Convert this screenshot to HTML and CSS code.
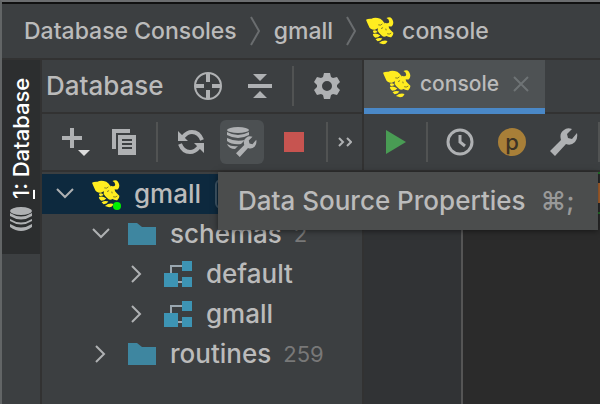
FILE: index.html
```
<!DOCTYPE html>
<html lang="en">
<head>
    <meta charset="UTF-8">
    <title>Database Consoles</title>
    <link rel="stylesheet" href="styles.css">
</head>
<body>
    <!-- shared icons -->
    <svg class="sprite" aria-hidden="true">
        <symbol id="bee" viewBox="0 0 82 82">
            <path d="M0 8 Q6 4 16 5 Q26 -1 42 5 Q50 10 54 18 L62 21 Q68 24 67 32 L72 38 L80 46 Q81 54 74 59 Q66 60 60 56 Q52 60 46 54 Q38 48 34 40 L35 33 L26 37 Q12 38 8 26 Q4 18 0 8 Z"/>
            <path d="M60 3 Q70 -2 76 5 Q84 18 76 27 Q68 30 58 24 L54 16 Q66 22 68 14 Q68 6 60 3 Z"/>
            <path d="M20 40 Q30 36 34 44 Q26 48 22 46 Z M20 50 Q30 46 42 54 Q36 61 27 61 Q20 57 20 50 Z M28 65 Q38 59 48 63 Q44 70 34 71 Z M38 76 Q50 66 63 70 Q60 79 50 80 Z"/>
            <path class="bee-line" d="M36 23 Q44 26 48 20 M44 34 L50 31 M58 34 L59 39 M62 49 Q68 52 74 47"/>
        </symbol>
        <symbol id="down" viewBox="0 0 18 18"><path d="M1 4 L9 12 L17 4"/></symbol>
        <symbol id="right" viewBox="0 0 18 18"><path d="M4 1 L12 9 L4 17"/></symbol>
        <symbol id="folder" viewBox="0 0 28 22"><path d="M0 0 H9 L14 4 H28 V22 H0 Z"/></symbol>
        <symbol id="schema" viewBox="0 0 28 26">
            <path d="M7 12 V5 H18 M14 21 H18" fill="none" stroke="#9aa7b0" stroke-width="2"/>
            <path d="M0 12 H14 V26 H0 Z M18 0 H28 V10 H18 Z M18 16 H28 V26 H18 Z"/>
        </symbol>
        <symbol id="wrench" viewBox="0 0 28 28">
            <path d="M0 23 L11 12 Q9 5 14 2 Q17 -1 22 1 L17 6 L18 10 L22 11 L27 5 Q28 11 25 14 Q21 18 16 16 L5 28 Z"/>
        </symbol>
    </svg>

    <div class="window">
        <nav class="breadcrumbs">
            <a href="#">Database Consoles</a>
            <svg class="crumb-arrow" viewBox="0 0 10 30"><path d="M1 1 L9 15 L1 29"/></svg>
            <a href="#">gmall</a>
            <svg class="crumb-arrow" viewBox="0 0 10 30"><path d="M1 1 L9 15 L1 29"/></svg>
            <a href="#" class="crumb-file"><svg class="bee"><use href="#bee"/></svg>console</a>
        </nav>

        <div class="main">
            <aside class="stripe">
                <button class="stripe-tab">
                    <svg class="stripe-icon" viewBox="0 0 24 22">
                        <g transform="rotate(-90 12 12) translate(2 0)">
                            <ellipse cx="11" cy="4" rx="11" ry="4"/>
                            <path d="M0 6 Q11 13 22 6 V9 Q11 16 0 9 Z M0 12 Q11 19 22 12 V14 Q11 21 0 14 Z M0 17 Q11 24 22 17 V20 Q11 28 0 20 Z"/>
                        </g>
                    </svg>
                    <span><u>1</u>: Database</span>
                </button>
            </aside>

            <section class="panel">
                <header class="panel-header">
                    <h2>Database</h2>
                    <button class="icon-btn" aria-label="Select opened file">
                        <svg viewBox="0 0 28 28" width="28" height="28">
                            <g fill="none" stroke="#afb1b3"><circle cx="14" cy="14" r="13" stroke-width="2"/><path d="M14 1 V10 M14 18 V27 M1 14 H10 M18 14 H27" stroke-width="4"/></g>
                        </svg>
                    </button>
                    <button class="icon-btn collapse" aria-label="Collapse all">
                        <svg viewBox="0 0 24 24" width="24" height="24"><path d="M5 0 H19 L12 7 Z M0 10 H24 V14 H0 Z M12 17 L19 24 H5 Z"/></svg>
                    </button>
                    <i class="divider"></i>
                    <button class="icon-btn" aria-label="Settings">
                        <svg viewBox="0 0 26 26" width="26" height="26">
                            <path fill-rule="evenodd" d="M10 0 H16 L17 4 L19 5 L23 4 L26 9 L23 12 V14 L26 17 L23 22 L19 21 L17 22 L16 26 H10 L9 22 L7 21 L3 22 L0 17 L3 14 V12 L0 9 L3 4 L7 5 L9 4 Z M13 8 A5 5 0 1 0 13 18 A5 5 0 1 0 13 8 Z"/>
                        </svg>
                    </button>
                </header>

                <div class="toolbar">
                    <button class="icon-btn" aria-label="New">
                        <svg viewBox="0 0 28 28" width="28" height="28"><path d="M8 0 H12 V8 H20 V12 H12 V20 H8 V12 H0 V8 H8 Z"/><path d="M16 22 H28 L22 28 Z" fill="#dcdcdc"/></svg>
                    </button>
                    <button class="icon-btn copy" aria-label="Duplicate">
                        <svg viewBox="0 0 24 26" width="24" height="26"><path d="M0 0 H18 V4 H4 V20 H0 Z"/><path fill-rule="evenodd" d="M6 6 H24 V26 H6 Z M10 10 V12 H20 V10 Z M10 14 V16 H20 V14 Z M10 18 V20 H20 V18 Z"/></svg>
                    </button>
                    <i class="divider"></i>
                    <button class="icon-btn" aria-label="Refresh">
                        <svg viewBox="0 0 26 24" width="26" height="24">
                            <path d="M5 7 Q9 2 14 2 Q21 2 24 10 M21 17 Q17 22 12 22 Q5 22 2 14" fill="none" stroke="#afb1b3" stroke-width="4"/>
                            <path d="M0 1 V11 H10 Z M26 23 V13 H16 Z"/>
                        </svg>
                    </button>
                    <button class="icon-btn active" aria-label="Data Source Properties">
                        <svg viewBox="0 0 32 30" width="32" height="30">
                            <ellipse cx="12" cy="3" rx="11" ry="3"/>
                            <path d="M1 5 Q12 11 23 5 V8 Q12 14 1 8 Z M1 11 Q9 15 19 13 L15 17 Q6 18 1 14 Z M1 17 Q6 20 12 19 L9 22 Q3 22 1 17 Z"/>
                            <use href="#wrench" x="10" y="9" width="21" height="21"/>
                        </svg>
                    </button>
                    <button class="icon-btn" aria-label="Stop"><i class="stop"></i></button>
                    <i class="divider"></i>
                    <button class="icon-btn more" aria-label="More">
                        <svg viewBox="0 0 14 10" width="14" height="10"><path d="M1 1 L5 5 L1 9 M9 1 L13 5 L9 9" fill="none" stroke="#afb1b3" stroke-width="2"/></svg>
                    </button>
                </div>

                <ul class="tree">
                    <li class="row selected"><svg class="arrow"><use href="#down"/></svg><span class="source"><svg class="bee"><use href="#bee"/></svg><i class="online"></i></span>gmall<span class="badge"></span></li>
                    <li class="row level-1"><svg class="arrow"><use href="#down"/></svg><svg class="folder"><use href="#folder"/></svg>schemas<span class="count">2</span></li>
                    <li class="row level-2"><svg class="arrow"><use href="#right"/></svg><svg class="schema"><use href="#schema"/></svg>default</li>
                    <li class="row level-2"><svg class="arrow"><use href="#right"/></svg><svg class="schema"><use href="#schema"/></svg>gmall</li>
                    <li class="row level-1"><svg class="arrow"><use href="#right"/></svg><svg class="folder"><use href="#folder"/></svg>routines<span class="count">259</span></li>
                </ul>
            </section>

            <section class="editor">
                <div class="tabs">
                    <div class="tab">
                        <svg class="bee"><use href="#bee"/></svg>
                        <span>console</span>
                        <button class="icon-btn close" aria-label="Close">
                            <svg viewBox="0 0 16 16" width="16" height="16"><path d="M1 1 L15 15 M15 1 L1 15" fill="none" stroke="#6e7375" stroke-width="2"/></svg>
                        </button>
                    </div>
                </div>
                <div class="toolbar editor-toolbar">
                    <button class="icon-btn" aria-label="Execute">
                        <svg viewBox="0 0 20 24" width="20" height="24"><path d="M0 0 L20 12 L0 24 Z" fill="#499c54"/></svg>
                    </button>
                    <i class="divider"></i>
                    <button class="icon-btn" aria-label="History">
                        <svg viewBox="0 0 28 28" width="28" height="28"><g fill="none" stroke="#afb1b3" stroke-width="3"><circle cx="14" cy="14" r="12"/><path d="M14 7 V14 L19 18"/></g></svg>
                    </button>
                    <button class="icon-btn param" aria-label="Parameters">p</button>
                    <button class="icon-btn" aria-label="Settings"><svg width="28" height="28"><use href="#wrench"/></svg></button>
                    <i class="divider"></i>
                </div>
                <div class="code">
                    <div class="gutter"></div>
                    <div class="text"><div class="statement"><i class="keyword"></i></div></div>
                </div>
            </section>
        </div>
    </div>

    <div class="tooltip" role="tooltip">Data Source Properties <kbd>⌘;</kbd></div>
</body>
</html>
```

FILE: styles.css
```
* {
    box-sizing: border-box;
}
body {
    margin: 0;
    background: #3c3f41;
    color: #bbbbbb;
    font: 500 26px/40px Inter, "Liberation Sans", sans-serif;
    overflow: hidden;
}
.sprite {
    position: absolute;
    width: 0;
    height: 0;
}
svg {
    display: block;
    flex: none;
    fill: #afb1b3;
}
a {
    color: inherit;
    text-decoration: none;
}
.window {
    display: flex;
    flex-direction: column;
    min-height: 100vh;
    border-top: 2px solid #6b6d6f;
    border-left: 2px solid #626566;
}
.breadcrumbs {
    display: flex;
    align-items: center;
    height: 58px;
    padding-left: 22px;
    border-top: 2px solid #101010;
    border-bottom: 2px solid #323232;
    font-size: 23px;
}
.crumb-arrow {
    width: 10px;
    height: 30px;
    margin: 0 14px 0 13px;
    fill: none;
    stroke: #6a6d6f;
    stroke-width: 2;
}
.crumb-file {
    display: flex;
    align-items: center;
    gap: 8px;
    margin-left: -4px;
}
.bee {
    width: 28px;
    height: 28px;
    fill: #ffed20;
}
.bee-line {
    fill: none;
    stroke: #4b4b2c;
    stroke-width: 2;
}
.main {
    display: flex;
    flex: 1;
}
.stripe {
    flex: none;
    width: 40px;
    border-right: 2px solid #323232;
}
.stripe-tab {
    display: flex;
    align-items: center;
    gap: 8px;
    width: 38px;
    height: 194px;
    padding: 23px 0;
    border: 0;
    background: #2c2e2f;
    color: #ffffff;
    font: 500 22px/38px Inter, "Liberation Sans", sans-serif;
    white-space: nowrap;
    writing-mode: vertical-rl;
    transform: rotate(180deg);
}
.stripe-icon {
    width: 24px;
    height: 24px;
    transform: rotate(-90deg);
}
.panel {
    display: flex;
    flex-direction: column;
    flex: none;
    width: 322px;
    border-right: 2px solid #323232;
}
.panel-header,
.tabs {
    display: flex;
    align-items: center;
    height: 54px;
    border-bottom: 2px solid #323232;
}
.panel-header {
    padding-left: 4px;
}
.tabs {
    align-items: flex-start;
}
h2 {
    margin: 0 30px 0 0;
    font-size: 26px;
    font-weight: 500;
}
.icon-btn {
    display: flex;
    align-items: center;
    justify-content: center;
    flex: none;
    padding: 0;
    border: 0;
    background: none;
    color: inherit;
}
.divider {
    flex: none;
    width: 2px;
    height: 40px;
    background: #515353;
}
.collapse {
    margin: 0 20px 0 26px;
}
.panel-header .divider {
    margin-right: 20px;
}
.toolbar {
    display: flex;
    align-items: center;
    height: 58px;
    padding-left: 20px;
    border-bottom: 2px solid #323232;
}
.copy {
    margin: 0 20px 0 22px;
}
.toolbar .divider {
    margin-right: 20px;
}
.active {
    width: 44px;
    height: 44px;
    margin: 0 20px 0 16px;
    border-radius: 6px;
    background: #4c5052;
}
.stop {
    width: 20px;
    height: 20px;
    margin-right: 22px;
    background: #c75450;
}
.toolbar .more {
    margin-left: -10px;
}
.tree {
    margin: 0;
    padding: 2px 0 0;
    list-style: none;
}
.row {
    display: flex;
    align-items: center;
    height: 40px;
    padding-left: 14px;
}
.level-1 {
    padding-left: 50px;
}
.level-2 {
    padding-left: 86px;
}
.selected {
    background: #0d293e;
}
.arrow {
    width: 18px;
    height: 18px;
    margin-right: 18px;
    fill: none;
    stroke: #afb1b3;
    stroke-width: 2;
}
.source {
    position: relative;
    margin-right: 14px;
}
.online {
    position: absolute;
    right: -1px;
    bottom: -2px;
    width: 8px;
    height: 8px;
    border-radius: 50%;
    background: #00f000;
}
.badge {
    width: 40px;
    height: 30px;
    margin-left: 14px;
    border: 2px solid #3e5566;
    border-radius: 6px;
}
.folder {
    width: 28px;
    height: 22px;
    margin-right: 14px;
    fill: #3e86a0;
}
.schema {
    width: 28px;
    height: 26px;
    margin-right: 14px;
    fill: #3d94b4;
}
.count {
    margin-left: 12px;
    color: #787878;
    font-size: 22px;
    font-weight: 400;
}
.editor {
    display: flex;
    flex-direction: column;
    flex: 1;
    min-width: 0;
    overflow: hidden;
}
.tab {
    display: flex;
    align-items: center;
    gap: 9px;
    height: 54px;
    padding: 0 16px 0 19px;
    border-bottom: 6px solid #4a88c7;
    background: #4e5254;
    font-size: 21px;
}
.close {
    margin-left: 5px;
}
.editor-toolbar {
    gap: 24px;
    padding-left: 22px;
}
.editor-toolbar .divider {
    margin: 0 -6px 0 -4px;
}
.param {
    width: 28px;
    height: 28px;
    border-radius: 50%;
    background: #a87f38;
    color: #3c3326;
    font: 500 22px/28px Inter, "Liberation Sans", sans-serif;
}
.code {
    display: flex;
    flex: 1;
    background: #2b2b2b;
}
.gutter {
    flex: none;
    width: 99px;
    border-right: 2px solid #555555;
    background: #313335;
}
.text {
    flex: 1;
}
.statement {
    display: flex;
    align-items: center;
    justify-content: flex-end;
    height: 42px;
    border-top: 2px solid #247028;
    border-bottom: 2px solid #247028;
}
.keyword {
    width: 12px;
    height: 20px;
    background: #b0662f;
}
.tooltip {
    position: absolute;
    top: 172px;
    right: 2px;
    left: 218px;
    height: 58px;
    padding-left: 20px;
    background: #4b4d4d;
    box-shadow: 0 1px 6px rgba(0, 0, 0, 0.5);
    line-height: 58px;
    white-space: nowrap;
}
kbd {
    margin-left: 8px;
    color: #999999;
    font: inherit;
}
```
